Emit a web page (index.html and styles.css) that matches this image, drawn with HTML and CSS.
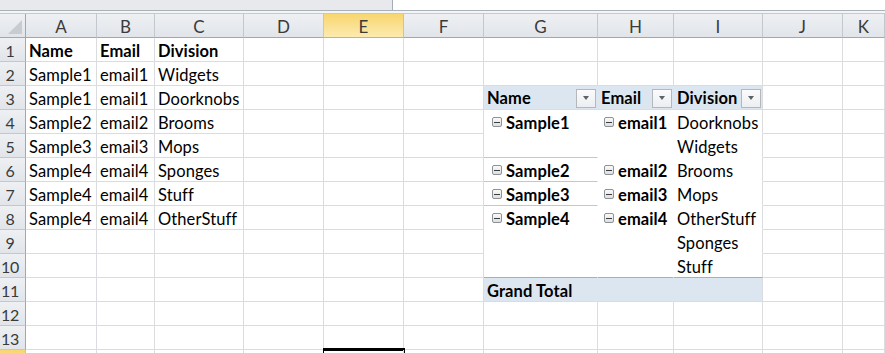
FILE: index.html
```html
<!DOCTYPE html>
<html lang="en">
<head>
  <meta charset="UTF-8" />
  <title>Pivot sheet</title>
  <link rel="stylesheet" href="styles.css">
</head>
<body>

  <div class="topbar">
    <div class="namebox"></div>
    <div class="formula"></div>
  </div>
  <div class="divider"></div>

  <div class="sheet">
    <!-- column headers -->
    <div class="hd corner"><span class="tri"></span></div>
    <div class="hd col">A</div>
    <div class="hd col">B</div>
    <div class="hd col">C</div>
    <div class="hd col">D</div>
    <div class="hd col active">E</div>
    <div class="hd col">F</div>
    <div class="hd col">G</div>
    <div class="hd col">H</div>
    <div class="hd col">I</div>
    <div class="hd col">J</div>
    <div class="hd col">K</div>

    <!-- row 1 -->
    <div class="hd row">1</div>
    <div class="c b">Name</div><div class="c b">Email</div><div class="c b">Division</div>
    <div class="c"></div><div class="c"></div><div class="c"></div>
    <div class="c"></div><div class="c"></div><div class="c"></div><div class="c"></div><div class="c"></div>

    <!-- row 2 -->
    <div class="hd row">2</div>
    <div class="c">Sample1</div><div class="c">email1</div><div class="c">Widgets</div>
    <div class="c"></div><div class="c"></div><div class="c"></div>
    <div class="c"></div><div class="c"></div><div class="c"></div><div class="c"></div><div class="c"></div>

    <!-- row 3 : pivot header -->
    <div class="hd row">3</div>
    <div class="c">Sample1</div><div class="c">email1</div><div class="c">Doorknobs</div>
    <div class="c"></div><div class="c"></div><div class="c"></div>
    <div class="c pv pv-head">Name<span class="drop"></span></div>
    <div class="c pv pv-head">Email<span class="drop"></span></div>
    <div class="c pv pv-head last">Division<span class="drop"></span></div>
    <div class="c"></div><div class="c"></div>

    <!-- row 4 -->
    <div class="hd row">4</div>
    <div class="c">Sample2</div><div class="c">email2</div><div class="c">Brooms</div>
    <div class="c"></div><div class="c"></div><div class="c"></div>
    <div class="c pv name"><span class="minus"></span>Sample1</div>
    <div class="c pv mail"><span class="minus"></span>email1</div>
    <div class="c pv last">Doorknobs</div>
    <div class="c"></div><div class="c"></div>

    <!-- row 5 -->
    <div class="hd row">5</div>
    <div class="c">Sample3</div><div class="c">email3</div><div class="c">Mops</div>
    <div class="c"></div><div class="c"></div><div class="c"></div>
    <div class="c pv split"></div>
    <div class="c pv"></div>
    <div class="c pv last">Widgets</div>
    <div class="c"></div><div class="c"></div>

    <!-- row 6 -->
    <div class="hd row">6</div>
    <div class="c">Sample4</div><div class="c">email4</div><div class="c">Sponges</div>
    <div class="c"></div><div class="c"></div><div class="c"></div>
    <div class="c pv name split"><span class="minus"></span>Sample2</div>
    <div class="c pv mail"><span class="minus"></span>email2</div>
    <div class="c pv last">Brooms</div>
    <div class="c"></div><div class="c"></div>

    <!-- row 7 -->
    <div class="hd row">7</div>
    <div class="c">Sample4</div><div class="c">email4</div><div class="c">Stuff</div>
    <div class="c"></div><div class="c"></div><div class="c"></div>
    <div class="c pv name split"><span class="minus"></span>Sample3</div>
    <div class="c pv mail"><span class="minus"></span>email3</div>
    <div class="c pv last">Mops</div>
    <div class="c"></div><div class="c"></div>

    <!-- row 8 -->
    <div class="hd row">8</div>
    <div class="c">Sample4</div><div class="c">email4</div><div class="c">OtherStuff</div>
    <div class="c"></div><div class="c"></div><div class="c"></div>
    <div class="c pv name"><span class="minus"></span>Sample4</div>
    <div class="c pv mail"><span class="minus"></span>email4</div>
    <div class="c pv last">OtherStuff</div>
    <div class="c"></div><div class="c"></div>

    <!-- row 9 -->
    <div class="hd row">9</div>
    <div class="c"></div><div class="c"></div><div class="c"></div>
    <div class="c"></div><div class="c"></div><div class="c"></div>
    <div class="c pv"></div>
    <div class="c pv"></div>
    <div class="c pv last">Sponges</div>
    <div class="c"></div><div class="c"></div>

    <!-- row 10 -->
    <div class="hd row">10</div>
    <div class="c"></div><div class="c"></div><div class="c"></div>
    <div class="c"></div><div class="c"></div><div class="c"></div>
    <div class="c pv total-top"></div>
    <div class="c pv total-top"></div>
    <div class="c pv last total-top">Stuff</div>
    <div class="c"></div><div class="c"></div>

    <!-- row 11 : grand total -->
    <div class="hd row">11</div>
    <div class="c"></div><div class="c"></div><div class="c"></div>
    <div class="c"></div><div class="c"></div><div class="c"></div>
    <div class="c pv total">Grand Total</div>
    <div class="c pv total"></div>
    <div class="c pv total last"></div>
    <div class="c"></div><div class="c"></div>

    <!-- row 12 -->
    <div class="hd row">12</div>
    <div class="c"></div><div class="c"></div><div class="c"></div>
    <div class="c"></div><div class="c"></div><div class="c"></div>
    <div class="c"></div><div class="c"></div><div class="c"></div><div class="c"></div><div class="c"></div>

    <!-- row 13 -->
    <div class="hd row">13</div>
    <div class="c"></div><div class="c"></div><div class="c"></div>
    <div class="c"></div><div class="c"></div><div class="c"></div>
    <div class="c"></div><div class="c"></div><div class="c"></div><div class="c"></div><div class="c"></div>

    <!-- row 14 (selected cell E14), only its top edge is in view -->
    <div class="hd row active"></div>
    <div class="c"></div><div class="c"></div><div class="c"></div>
    <div class="c"></div><div class="c sel"></div><div class="c"></div>
    <div class="c"></div><div class="c"></div><div class="c"></div><div class="c"></div><div class="c"></div>
  </div>

</body>
</html>
```

FILE: styles.css
```css
* {
  box-sizing: border-box;
  margin: 0;
  padding: 0;
}

body {
  font-family: 'Lato', 'Liberation Sans', sans-serif;
  font-size: 16.5px;
  letter-spacing: 0.1px;
  color: #000;
  background: #fff;
  width: 885px;
  height: 353px;
  overflow: hidden;
}

/* formula bar strip */
.topbar {
  display: flex;
  height: 11px;
  border-bottom: 1px solid #aab1b9;
}

.namebox {
  width: 393px;
  background: #e7e9ec;
  border-right: 1px solid #a6adb5;
}

.formula {
  flex: 1;
  background: #fff;
}

.divider {
  height: 3px;
  background: #f4f5f7;
  border-bottom: 1px solid #c4c9cf;
}

/* grid */
.sheet {
  display: grid;
  grid-template-columns: 26px 71px 58px 89px 80px 80px 80px 114px 76px 89px 80px 1fr;
  grid-auto-rows: 24px;
}

.hd {
  background: linear-gradient(#eef0f3, #e1e5ea);
  border-right: 1px solid #c3c8cf;
  border-bottom: 1px solid #9fa7b0;
  color: #3b3b3b;
  display: flex;
  align-items: center;
  justify-content: center;
  line-height: 1;
  padding-top: 2px;
  font-size: 17px;
}

.hd.row {
  border-bottom-color: #c3c8cf;
  border-right-color: #9fa7b0;
  font-size: 16px;
  letter-spacing: -0.3px;
  padding-left: 1px;
  padding-right: 6px;
  padding-top: 3px;
}

.hd.active {
  background: linear-gradient(#f8d66f, #fcebb0);
  border-right-color: #f0c24a;
  border-bottom-color: #e2b23a;
}

.corner {
  align-items: flex-end;
  justify-content: flex-end;
  padding: 0 3px 3px 0;
  border-right-color: #9fa7b0;
}

.tri {
  width: 0;
  height: 0;
  border-left: 14px solid transparent;
  border-bottom: 14px solid #c8ccd2;
}

.c {
  border-right: 1px solid #dadcdf;
  border-bottom: 1px solid #dadcdf;
  padding: 3px 0 0 3px;
  display: flex;
  align-items: center;
  white-space: nowrap;
}

.b,
.pv-head,
.name,
.mail,
.total {
  font-weight: 700;
}

/* pivot table */
.pv {
  background: #fff;
  border-right-color: #fff;
  border-bottom-color: #fff;
}

.pv.last {
  border-right-color: #dadcdf;
}

.pv-head {
  background: #dce6f1;
  border-right-color: #dce6f1;
  border-bottom-color: #d3dfed;
  justify-content: space-between;
  padding-right: 1px;
  padding-top: 1px;
}

.pv-head.last {
  border-right-color: #dadcdf;
}

.drop {
  width: 20px;
  height: 19px;
  border: 1px solid #b4b8bd;
  background: linear-gradient(#fbfbfc, #eceef1);
  display: flex;
  align-items: center;
  justify-content: center;
}

.drop::after {
  content: "";
  width: 0;
  height: 0;
  border-left: 3.5px solid transparent;
  border-right: 3.5px solid transparent;
  border-top: 4px solid #5c6166;
}

.name {
  padding-left: 8px;
}

.mail {
  padding-left: 6px;
}

.minus {
  width: 10px;
  height: 10px;
  border: 1px solid #8d9296;
  border-radius: 2px;
  background: linear-gradient(#fafafa, #dcdee0);
  margin-right: 4px;
  margin-top: -2px;
  display: flex;
  align-items: center;
  justify-content: center;
}

.minus::after {
  content: "";
  width: 6px;
  height: 1px;
  background: #3c3c3c;
}

.split {
  border-bottom-color: #b8c9de;
}

.total-top {
  border-bottom-color: #95b3d7;
}

.total {
  background: #dce6f1;
  border-right-color: #dce6f1;
  border-bottom-color: #dadcdf;
}

.total.last {
  border-right-color: #dadcdf;
}

.sel {
  position: relative;
  z-index: 1;
  box-shadow: 0 -1px 0 1px #000, inset 0 1px 0 0 #000;
}
```
